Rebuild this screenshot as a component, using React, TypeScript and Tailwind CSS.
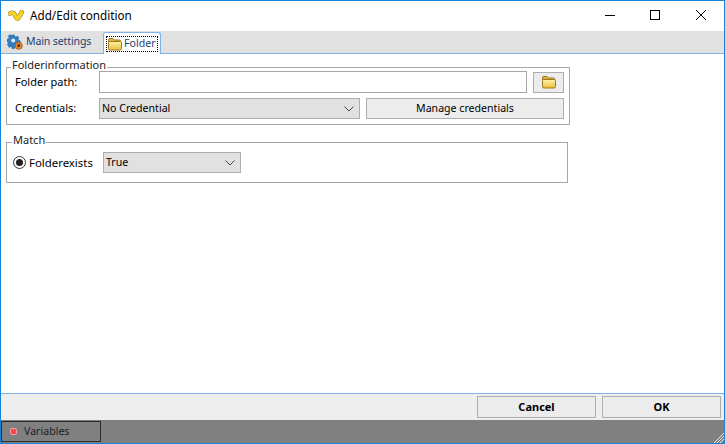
import React from "react";

const font = { fontFamily: '"Noto Sans", "Liberation Sans", sans-serif' };

function FolderIcon({ id }: { id: string }) {
  return (
    <svg viewBox="0 0 16 16" width="16" height="16">
      <defs>
        <linearGradient id={id} x1="0" y1="0" x2="0" y2="1">
          <stop offset="0" stopColor="#fff3a8" />
          <stop offset="1" stopColor="#e9bf3c" />
        </linearGradient>
      </defs>
      <path d="M1.5 4 Q1.5 2.5 3 2.5 H6 L7.5 4 H12.5 Q13.5 4 13.5 5 V6 H1.5 Z" fill="#dcb543" stroke="#9a7a1e" />
      <path d="M1.5 6.5 Q1.5 5.5 2.5 5.5 H13.5 Q14.5 5.5 14.5 6.5 V12.5 Q14.5 14 13 14 H3 Q1.5 14 1.5 12.5 Z" fill={`url(#${id})`} stroke="#9a7a1e" />
    </svg>
  );
}

function GearIcon() {
  return (
    <svg viewBox="0 0 16 16" width="16" height="16">
      <path
        d="M5 1h2.4l.3 1.6 1.2.5 1.4-.9 1.6 1.6-.9 1.4.5 1.2 1.6.3v2.2l-1.6.3-.5 1.2.9 1.4-1.6 1.6-1.4-.9-1.2.5-.3 1.6H5l-.3-1.6-1.2-.5-1.4.9L.5 10.3l.9-1.4-.5-1.2L0 7.4V5.2l1.6-.3.5-1.2-.9-1.4L2.8.7l1.4.9 .6-.3z"
        fill="#2f7fc4"
        stroke="#1d5a96"
        strokeWidth="0.6"
      />
      <circle cx="6.2" cy="6.4" r="2" fill="#dcecf8" />
      <circle cx="11.7" cy="11.7" r="3.6" fill="#e8862c" stroke="#9a4f12" strokeWidth="0.7" />
      <circle cx="11.7" cy="11.7" r="1.4" fill="#4a2b12" />
    </svg>
  );
}

function Logo() {
  return (
    <svg viewBox="0 0 16 12" width="16" height="12">
      <path d="M2 3.5 Q4.5 2 6 3.5 L8.5 8 Q9.5 9.5 10.5 8 L13.8 2.2" fill="none" stroke="#8f8450" strokeWidth="4.6" strokeLinecap="round" />
      <path d="M2 3.5 Q4.5 2 6 3.5 L8.5 8 Q9.5 9.5 10.5 8 L13.8 2.2" fill="none" stroke="#f6d21f" strokeWidth="3.6" strokeLinecap="round" />
    </svg>
  );
}

function Chevron() {
  return (
    <svg viewBox="0 0 10 6" width="10" height="6" className="shrink-0">
      <path d="M0.5 0.5 L5 5 L9.5 0.5" fill="none" stroke="#444" strokeWidth="1" />
    </svg>
  );
}

function Select({ label, className }: { label: string; className: string }) {
  return (
    <div className={`flex items-center justify-between border border-[#adadad] bg-[#e1e1e1] pl-[2px] pr-[5px] text-black ${className}`}>
      <span>{label}</span>
      <Chevron />
    </div>
  );
}

export default function App() {
  return (
    <div style={font} className="flex h-[444px] w-[725px] flex-col overflow-hidden border border-[#1883d7] bg-white text-[10.6px] text-black">
      {/* Title bar */}
      <div className="flex h-[30px] shrink-0 items-center bg-white">
        <div className="ml-[7px] flex w-[17px] items-center">
          <Logo />
        </div>
        <span className="ml-[5px] text-[11.7px]">Add/Edit condition</span>
        <div className="ml-auto flex h-full items-center">
          <svg width="46" height="30" viewBox="0 0 46 30"><path d="M19 14.5 H29" stroke="#000" strokeWidth="1" /></svg>
          <svg width="46" height="30" viewBox="0 0 46 30"><rect x="18.5" y="9.5" width="9" height="9" fill="none" stroke="#000" strokeWidth="1" /></svg>
          <svg width="46" height="30" viewBox="0 0 46 30"><path d="M18 9 L28 19 M28 9 L18 19" stroke="#000" strokeWidth="1" /></svg>
        </div>
      </div>

      {/* Tabs */}
      <div className="flex h-[23px] shrink-0 items-end border-b border-[#7fb2e5] bg-[#e1e1e1]">
        <div className="flex h-[22px] w-[102px] items-center gap-[3px] pl-[6px] text-[#1f3f73]">
          <GearIcon />
          <span className="tracking-[-0.15px]">Main settings</span>
        </div>
        <div className="-mb-px flex h-[22px] w-[58px] items-center rounded-t-[3px] border border-b-0 border-[#7fb2e5] bg-white pl-[2px] text-[#1f3f73]">
          <div className="flex h-[16px] items-center gap-[1px] border border-dotted border-black pr-[1px]">
            <FolderIcon id="folder-tab" />
            <span>Folder</span>
          </div>
        </div>
      </div>

      {/* Content */}
      <div className="flex-1 bg-white pl-[5px] pt-[9px]">
        <fieldset className="w-[562px] border border-[#a6a6a6] px-[5px] pb-[5px]">
          <legend className="-ml-[1px] h-[8px] px-[1px] text-[11px] leading-[4px] text-[#222]">Folderinformation</legend>
          <div className="flex items-center">
            <span className="ml-[3px] w-[84px] text-[11px]">Folder path:</span>
            <div className="h-[22px] w-[428px] border border-[#a6a6a6] bg-white" />
            <div className="ml-[6px] flex h-[21px] w-[31px] items-center justify-center border border-[#adadad] bg-[#ececec]">
              <FolderIcon id="folder-btn" />
            </div>
          </div>
          <div className="mt-[5px] flex items-center">
            <span className="ml-[3px] w-[84px] text-[11px]">Credentials:</span>
            <Select label="No Credential" className="h-[21px] w-[261px]" />
            <div className="ml-[6px] flex h-[21px] w-[198px] items-center justify-center border border-[#adadad] bg-[#ececec]">Manage credentials</div>
          </div>
        </fieldset>

        <fieldset className="mt-[13px] h-[45px] w-[562px] border border-[#a6a6a6] px-[6px]">
          <legend className="-ml-[1px] h-[8px] px-[1px] text-[11px] leading-[4px] text-[#222]">Match</legend>
          <div className="mt-[6px] flex items-center">
            <div className="flex h-[13px] w-[13px] items-center justify-center rounded-full border border-[#333] bg-white">
              <div className="h-[7px] w-[7px] rounded-full bg-[#222]" />
            </div>
            <span className="ml-[3px] w-[74px] text-[11.4px]">Folderexists</span>
            <Select label="True" className="h-[21px] w-[138px]" />
          </div>
        </fieldset>
      </div>

      {/* Footer */}
      <div className="flex h-[27px] shrink-0 items-center justify-end gap-[6px] border-t border-[#7fb2e5] bg-[#eeeeee] pr-[3px]">
        <div className="flex h-[22px] w-[119px] items-center justify-center border border-[#adadad] bg-[#ececec] text-[11px] font-bold">Cancel</div>
        <div className="flex h-[22px] w-[119px] items-center justify-center border border-[#adadad] bg-[#ececec] text-[11px] font-bold">OK</div>
      </div>

      {/* Status */}
      <div className="relative flex h-[23px] shrink-0 items-end bg-[#808080] pb-[1px]">
        <div className="flex h-[21px] w-[100px] items-center border border-[#2b2b2b] pl-[9px] text-[#1c1c2a]">
          <span className="h-[5px] w-[5px] rounded-[1px] bg-[#f04a50] outline outline-1 outline-[#f4a0a4]" />
          <span className="ml-[8px]">Variables</span>
        </div>
        <svg className="absolute bottom-0 right-0" width="11" height="11" viewBox="0 0 11 11">
          <path d="M1 11 L11 1 M4 11 L11 4 M7 11 L11 7" stroke="#e8e8e8" strokeWidth="1" />
        </svg>
      </div>
    </div>
  );
}
